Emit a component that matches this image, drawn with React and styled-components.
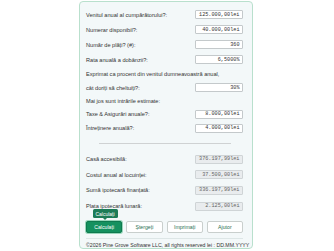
import React from "react";
import styled, { createGlobalStyle } from "styled-components";

const Global = createGlobalStyle`
  body {
    margin: 0;
    background: #ffffff;
    font-family: "Liberation Sans", Arial, sans-serif;
  }
`;

const Card = styled.div`
  box-sizing: border-box;
  margin: 1px 0 0 79px;
  width: 174px;
  height: 248px;
  padding: 5.5px 9px 0 6px;
  background: #f3f8f9;
  border: 1px solid #b9e0cd;
  border-radius: 4px;
  display: flex;
  flex-direction: column;
  color: #333;
  font-size: 5.6px;
`;

const Row = styled.div`
  display: flex;
  align-items: center;
  justify-content: space-between;
  height: ${(p) => p.h || 15}px;
`;

const Label = styled.span`
  white-space: nowrap;
`;

const Field = styled.div`
  box-sizing: border-box;
  width: 48px;
  height: 9px;
  padding: 0 2.5px;
  display: flex;
  align-items: center;
  justify-content: flex-end;
  font-family: "Liberation Mono", "DejaVu Sans Mono", monospace;
  font-size: 5.2px;
  color: ${(p) => (p.result ? "#666" : "#333")};
  background: ${(p) => (p.result ? "#e9ecee" : "#ffffff")};
  border: 0.6px solid ${(p) => (p.result ? "#cfd4d6" : "#c4c9cb")};
  border-radius: 1px;
`;

const Divider = styled.div`
  height: 16px;
  display: flex;
  align-items: center;
  justify-content: center;
  &::after {
    content: "";
    width: 132px;
    border-top: 0.8px solid #cfd2d3;
  }
`;

const Buttons = styled.div`
  position: relative;
  display: flex;
  gap: 4px;
  margin-top: 7px;
`;

const Button = styled.button`
  box-sizing: border-box;
  width: 38px;
  height: 12px;
  padding: 0;
  font-family: "Liberation Sans", Arial, sans-serif;
  font-size: 5.2px;
  border-radius: 2px;
  color: ${(p) => (p.primary ? "#ffffff" : "#2a6f52")};
  background: ${(p) => (p.primary ? "#15915f" : "#ffffff")};
  border: 0.7px solid ${(p) => (p.primary ? "#0f7a4f" : "#c9cfcd")};
  box-shadow: ${(p) => (p.primary ? "0 0 0 1px #9ad6bb" : "none")};
`;

const Tooltip = styled.div`
  position: absolute;
  left: 6.5px;
  top: -12px;
  width: 25px;
  height: 9px;
  display: flex;
  align-items: center;
  justify-content: center;
  background: #1c7b57;
  color: #fff;
  font-size: 5px;
  border-radius: 1.5px;
  &::after {
    content: "";
    position: absolute;
    bottom: -2px;
    left: 50%;
    margin-left: -2px;
    border-left: 2px solid transparent;
    border-right: 2px solid transparent;
    border-top: 2px solid #1c7b57;
  }
`;

const Footer = styled.div`
  margin-top: 5px;
  padding-top: 3px;
  border-top: 0.6px solid #dde6e6;
  font-size: 5.2px;
  white-space: nowrap;
  color: #333;
`;

const inputs = [
  ["Venitul anual al cumpărătorului?:", "125.000,00lei"],
  ["Numerar disponibil?:", "40.000,00lei"],
  ["Număr de plăți? (#):", "360"],
  ["Rata anuală a dobânzii?:", "6,5000%"],
];

const results = [
  ["Casă accesibilă:", "376.197,99lei", 15.5],
  ["Costul anual al locuinței:", "37.500,00lei", 15.5],
  ["Sumă ipotecară finanțată:", "336.197,99lei", 15.5],
  ["Plata ipotecară lunară:", "2.125,00lei", 16],
];

export default function App() {
  return (
    <>
      <Global />
      <Card>
        {inputs.map(([label, value]) => (
          <Row key={label}>
            <Label>{label}</Label>
            <Field>{value}</Field>
          </Row>
        ))}
        <Row h={13.5}>
          <Label>Exprimat ca procent din venitul dumneavoastră anual,</Label>
        </Row>
        <Row h={14}>
          <Label>cât doriți să cheltuiți?:</Label>
          <Field>30%</Field>
        </Row>
        <Row h={13}>
          <Label>Mai jos sunt intrările estimate:</Label>
        </Row>
        <Row h={13}>
          <Label>Taxe &amp; Asigurări anuale?:</Label>
          <Field>8.000,00lei</Field>
        </Row>
        <Row>
          <Label>Întreținere anuală?:</Label>
          <Field>4.000,00lei</Field>
        </Row>
        <Divider />
        {results.map(([label, value, h]) => (
          <Row key={label} h={h}>
            <Label>{label}</Label>
            <Field result>{value}</Field>
          </Row>
        ))}
        <Buttons>
          <Tooltip>Calculați</Tooltip>
          <Button primary>Calculați</Button>
          <Button>Ștergeți</Button>
          <Button>Imprimați</Button>
          <Button>Ajutor</Button>
        </Buttons>
        <Footer>
          ©2026 Pine Grove Software LLC, all rights reserved lei : DD.MM.YYYY
        </Footer>
      </Card>
    </>
  );
}
